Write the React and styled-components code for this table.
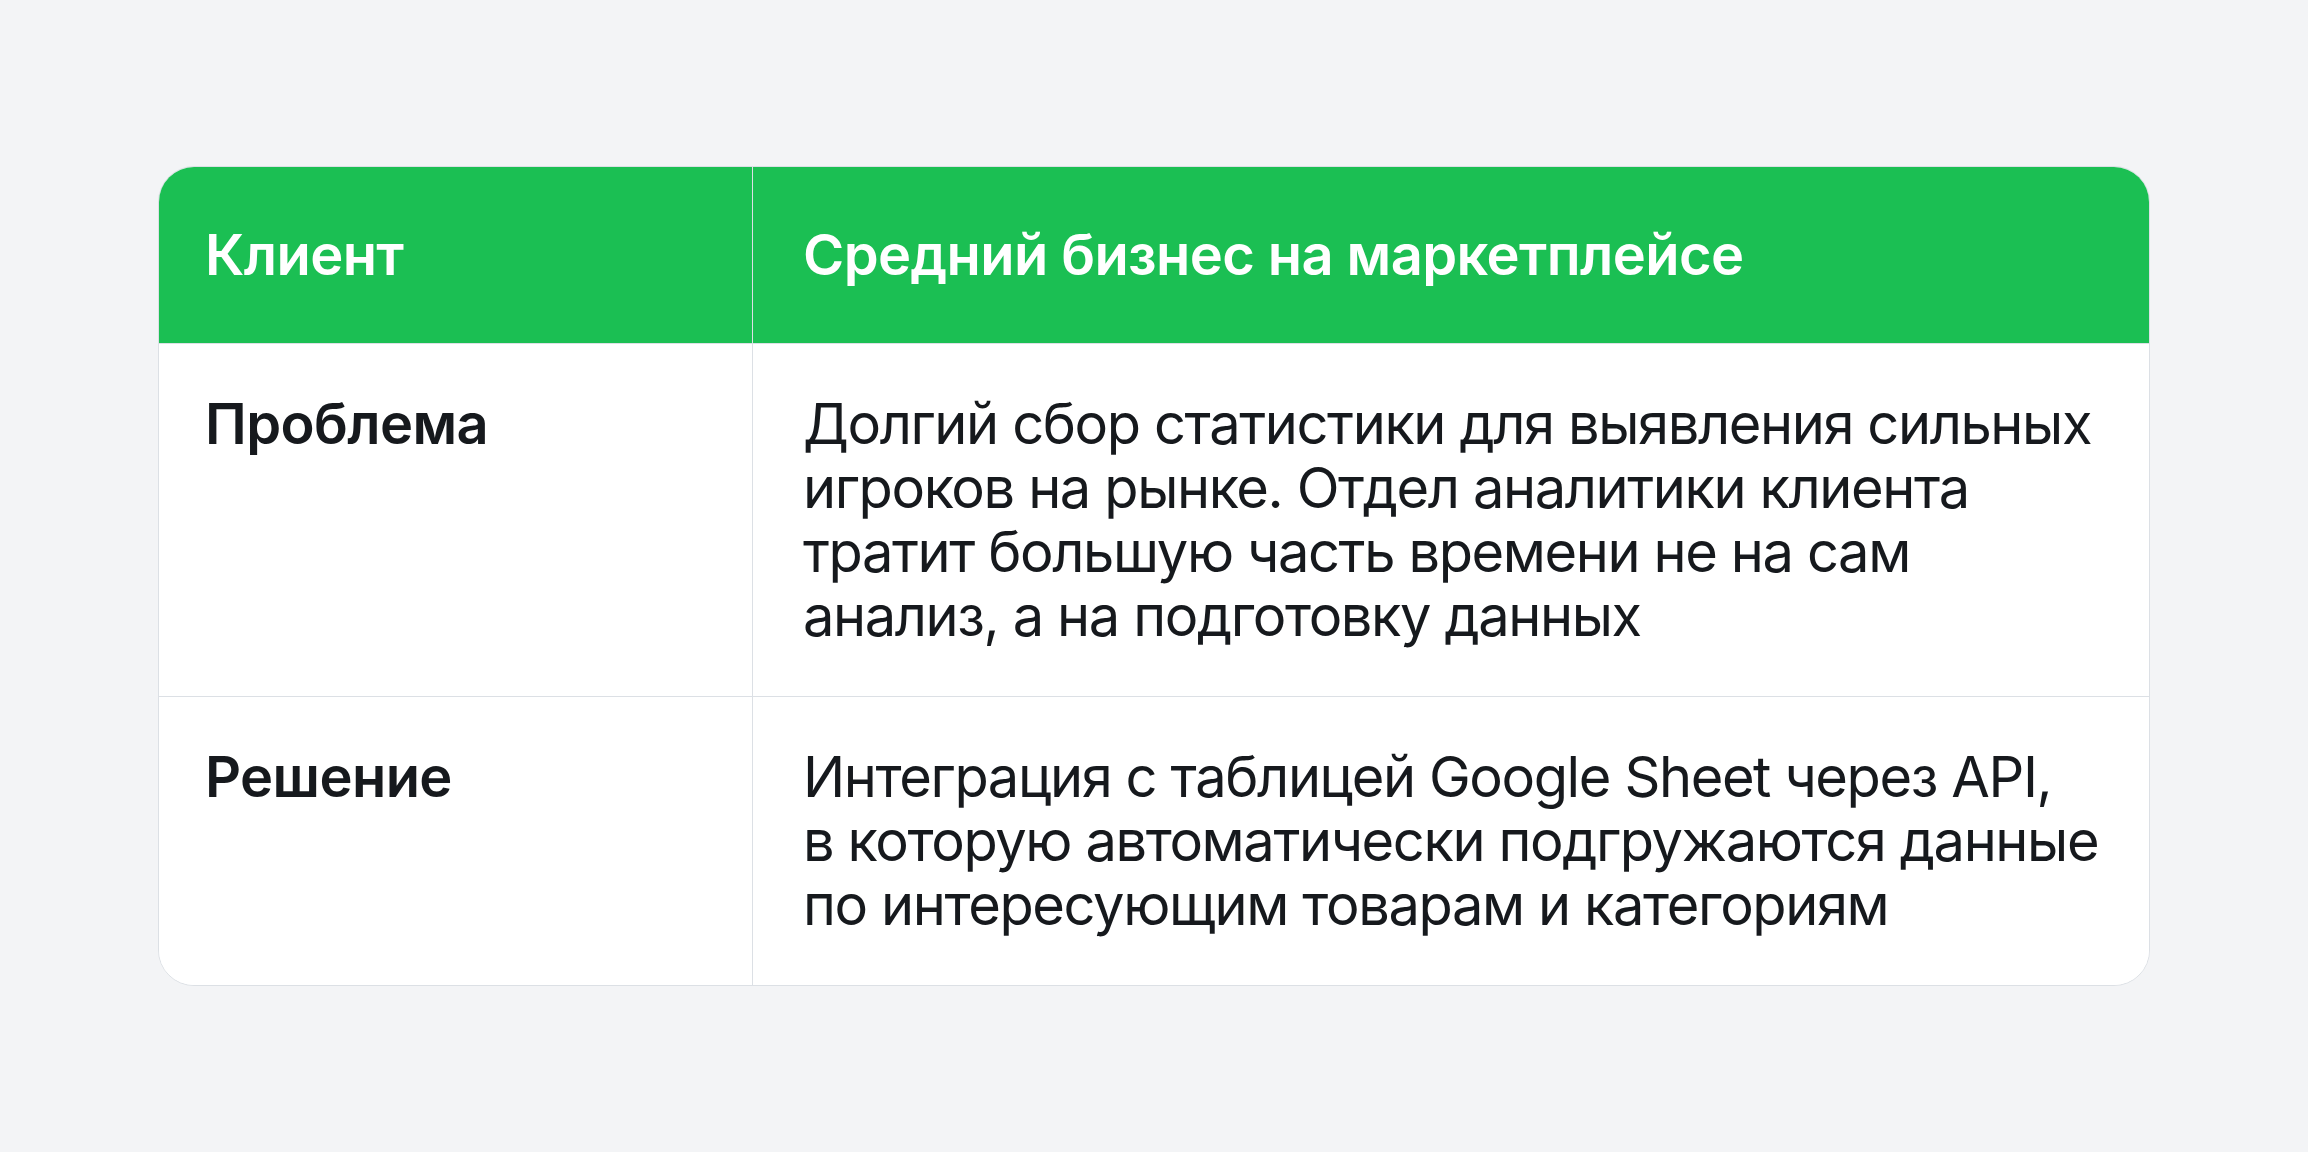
import React from "react";
import styled, { createGlobalStyle } from "styled-components";

const Global = createGlobalStyle`
  html, body { margin: 0; padding: 0; background: #F3F4F6; }
  body { font-family: Inter, "Noto Sans", sans-serif; }
`;

const Page = styled.div`
  width: 2308px;
  height: 1152px;
  display: flex;
  align-items: center;
  justify-content: center;
  background: #F3F4F6;
`;

const Table = styled.div`
  width: 1992px;
  box-sizing: border-box;
  border: 1px solid #DCE0E5;
  border-radius: 36px;
  overflow: hidden;
  background: #FFFFFF;
`;

const Row = styled.div`
  display: grid;
  grid-template-columns: 594px 1fr;
  background: ${p => (p.$head ? "#1BBF53" : "#FFFFFF")};
  border-bottom: ${p => (p.$last ? "none" : "1px solid #DCE0E5")};
`;

const Cell = styled.div`
  box-sizing: border-box;
  padding: ${p => (p.$head ? "56px" : "48px")} 24px;
  padding-left: ${p => (p.$first ? "46px" : "50px")};
  border-right: ${p => (p.$first ? "1px solid #DCE0E5" : "none")};
  font-size: 56px;
  line-height: 64px;
  font-weight: ${p => (p.$strong ? 600 : 400)};
  letter-spacing: ${p => (p.$strong ? "-0.6px" : "-1.4px")};
  color: ${p => (p.$head ? "#FFFFFF" : "#16191D")};
`;

const Line = styled.span`
  display: block;
  white-space: nowrap;
`;

const rows = [
  {
    label: "Проблема",
    lines: [
      "Долгий сбор статистики для выявления сильных",
      "игроков на рынке. Отдел аналитики клиента",
      "тратит большую часть времени не на сам",
      "анализ, а на подготовку данных",
    ],
  },
  {
    label: "Решение",
    lines: [
      "Интеграция с таблицей Google Sheet через API,",
      "в которую автоматически подгружаются данные",
      "по интересующим товарам и категориям",
    ],
  },
];

export default function App() {
  return (
    <>
      <Global />
      <Page>
        <Table>
          <Row $head>
            <Cell $head $first $strong>Клиент</Cell>
            <Cell $head $strong>Средний бизнес на маркетплейсе</Cell>
          </Row>
          {rows.map((r, i) => (
            <Row key={r.label} $last={i === rows.length - 1}>
              <Cell $first $strong>{r.label}</Cell>
              <Cell>
                {r.lines.map(l => (
                  <Line key={l}>{l}</Line>
                ))}
              </Cell>
            </Row>
          ))}
        </Table>
      </Page>
    </>
  );
}
